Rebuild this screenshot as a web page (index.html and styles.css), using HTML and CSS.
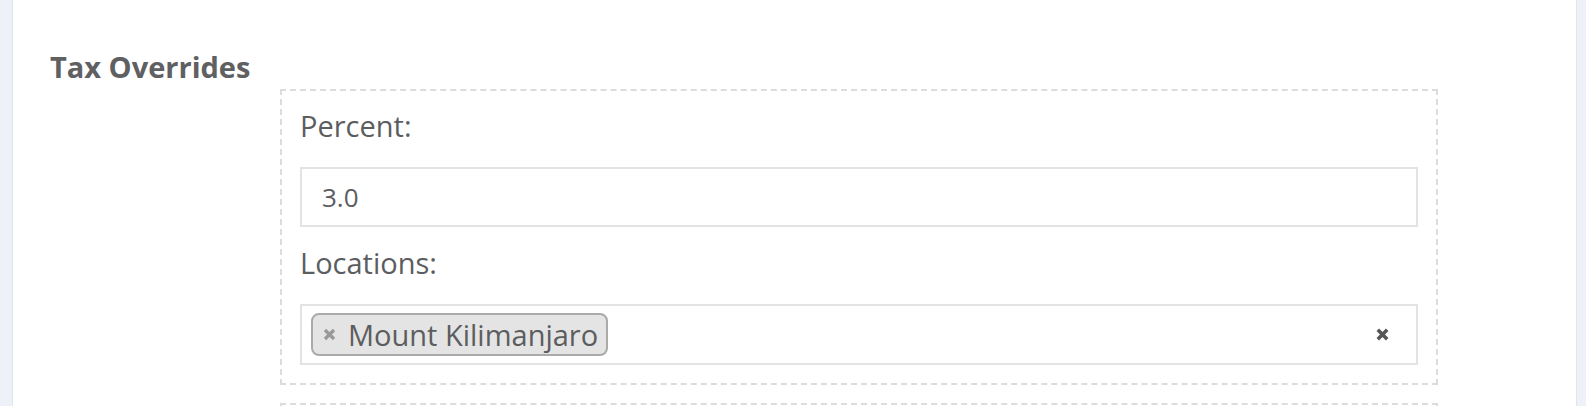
FILE: index.html
```html
<!DOCTYPE html>
<html lang="en">
<head>
    <meta charset="UTF-8">
    <title>Tax Overrides</title>
    <link rel="stylesheet" href="styles.css">
</head>
<body>

<div class="panel">
    <h3 class="section-title">Tax Overrides</h3>

    <div class="override-list">
        <div class="override">
            <label class="field-label">Percent:</label>
            <div class="text-field">3.0</div>

            <label class="field-label second">Locations:</label>
            <div class="select-field">
                <span class="tag">
                    <svg class="tag-remove" width="13" height="13" viewBox="0 0 13 13"><path d="M2 2L11 11M11 2L2 11" /></svg>
                    Mount Kilimanjaro
                </span>
                <svg class="clear-all" width="13" height="13" viewBox="0 0 13 13"><path d="M1.8 1.8L11.2 11.2M11.2 1.8L1.8 11.2" /></svg>
            </div>
        </div>
        <div class="override"></div>
    </div>
</div>

</body>
</html>
```

FILE: styles.css
```css
* { margin: 0; padding: 0; box-sizing: border-box; }

body {
    font-family: 'Open Sans', 'DejaVu Sans', sans-serif;
    background: #eef2f8;
    color: #5c5d5f;
    height: 100vh;
    overflow: hidden;
}

.panel {
    margin: 0 9px 0 12px;
    height: 100%;
    overflow: hidden;
    background: #fff;
    border-left: 1px solid #e1e5ec;
    border-right: 1px solid #e1e5ec;
    padding: 47px 0 0 37px;
}

/* --- Title --- */
.section-title {
    font-size: 29px;
    font-weight: 700;
    line-height: 40px;
    color: #5f6062;
}

/* --- Override boxes --- */
.override-list {
    margin: 2px 138px 0 230px;
    display: flex;
    flex-direction: column;
    gap: 18px;
}

.override {
    border: 2px dashed #dcdcdc;
    padding: 18px;
    min-height: 40px;
}

.field-label {
    display: block;
    font-size: 29px;
    line-height: 34px;
    margin-bottom: 24px;
}
.field-label.second { margin-top: 19px; }

.text-field {
    height: 60px;
    border: 2px solid #e3e3e3;
    padding: 0 20px;
    font-size: 26px;
    display: flex;
    align-items: center;
}

.select-field {
    height: 61px;
    border: 2px solid #e3e3e3;
    padding: 0 27px 0 9px;
    display: flex;
    align-items: center;
    justify-content: space-between;
}

.tag {
    display: flex;
    align-items: center;
    gap: 12px;
    height: 43px;
    padding: 0 8px 0 10px;
    background: #e4e4e4;
    border: 2px solid #aaa;
    border-radius: 8px;
    font-size: 29px;
    line-height: 39px;
}

.tag-remove path { stroke: #999; stroke-width: 3.4; fill: none; }
.clear-all path { stroke: #555; stroke-width: 3.6; fill: none; }
```
